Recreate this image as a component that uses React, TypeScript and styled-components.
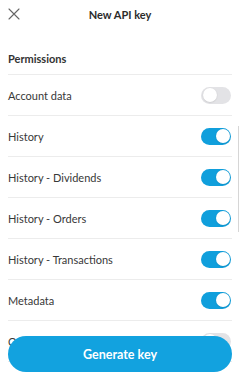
import React from "react";
import styled, { createGlobalStyle } from "styled-components";

const GlobalStyle = createGlobalStyle`
  html, body {
    margin: 0;
    padding: 0;
    background: #ffffff;
  }
  body {
    font-family: Lato, "Noto Sans", "Liberation Sans", sans-serif;
    color: #2b2b2b;
  }
`;

const Screen = styled.div`
  position: relative;
  width: 240px;
  height: 377px;
  overflow: hidden;
  background: #ffffff;
`;

const Header = styled.div`
  display: grid;
  grid-template-columns: 28px 1fr 28px;
  align-items: center;
  height: 28px;
`;

const CloseButton = styled.button`
  display: flex;
  align-items: center;
  justify-content: center;
  width: 28px;
  height: 28px;
  padding: 0;
  border: none;
  background: none;
`;

const Title = styled.h1`
  margin: 0;
  text-align: center;
  font-size: 11px;
  font-weight: 700;
  color: #2b2b2b;
`;

const Content = styled.div`
  padding: 0 8px;
`;

const SectionTitle = styled.h2`
  margin: 16px 0 0;
  height: 30px;
  line-height: 30px;
  font-size: 11px;
  font-weight: 700;
  color: #333;
  border-bottom: 1px solid #ececec;
`;

const Row = styled.div`
  display: flex;
  align-items: center;
  justify-content: space-between;
  height: 40px;
  border-bottom: 1px solid #ececec;
  font-size: 11px;
  color: #383838;
`;

const Track = styled.span<{ $on: boolean }>`
  position: relative;
  display: inline-block;
  width: 30px;
  height: 17px;
  border-radius: 9px;
  margin-right: 1px;
  background: ${({ $on }) => ($on ? "#109fdc" : "#e3e3e6")};
`;

const Knob = styled.span<{ $on: boolean }>`
  position: absolute;
  top: 1.5px;
  left: ${({ $on }) => ($on ? "14.5px" : "1.5px")};
  width: 14px;
  height: 14px;
  border-radius: 50%;
  background: #ffffff;
  box-shadow: 0 0.5px 1.5px rgba(0, 0, 0, 0.15);
`;

const ScrollIndicator = styled.div`
  position: absolute;
  right: 1px;
  top: 126px;
  width: 1px;
  height: 106px;
  background: #d6d6d6;
`;

const Footer = styled.div`
  position: absolute;
  left: 8px;
  right: 8px;
  bottom: 5px;
`;

const PrimaryButton = styled.button`
  width: 100%;
  height: 36px;
  border: none;
  border-radius: 18px;
  background: #12a2df;
  color: #ffffff;
  font-family: Lato, "Noto Sans", "Liberation Sans", sans-serif;
  font-size: 12.5px;
  font-weight: 700;
`;

const Toggle: React.FC<{ on: boolean }> = ({ on }) => (
  <Track $on={on}>
    <Knob $on={on} />
  </Track>
);

const permissions = [
  { label: "Account data", on: false },
  { label: "History", on: true },
  { label: "History - Dividends", on: true },
  { label: "History - Orders", on: true },
  { label: "History - Transactions", on: true },
  { label: "Metadata", on: true },
  { label: "Orders", on: false },
];

const App: React.FC = () => (
  <Screen>
    <GlobalStyle />
    <Header>
      <CloseButton aria-label="Close">
        <svg width="12" height="12" viewBox="0 0 12 12">
          <path d="M1 1L11 11M11 1L1 11" stroke="#666" strokeWidth="1.1" strokeLinecap="round" />
        </svg>
      </CloseButton>
      <Title>New API key</Title>
      <span />
    </Header>
    <Content>
      <SectionTitle>Permissions</SectionTitle>
      {permissions.map((p) => (
        <Row key={p.label}>
          <span>{p.label}</span>
          <Toggle on={p.on} />
        </Row>
      ))}
    </Content>
    <ScrollIndicator />
    <Footer>
      <PrimaryButton>Generate key</PrimaryButton>
    </Footer>
  </Screen>
);

export default App;
